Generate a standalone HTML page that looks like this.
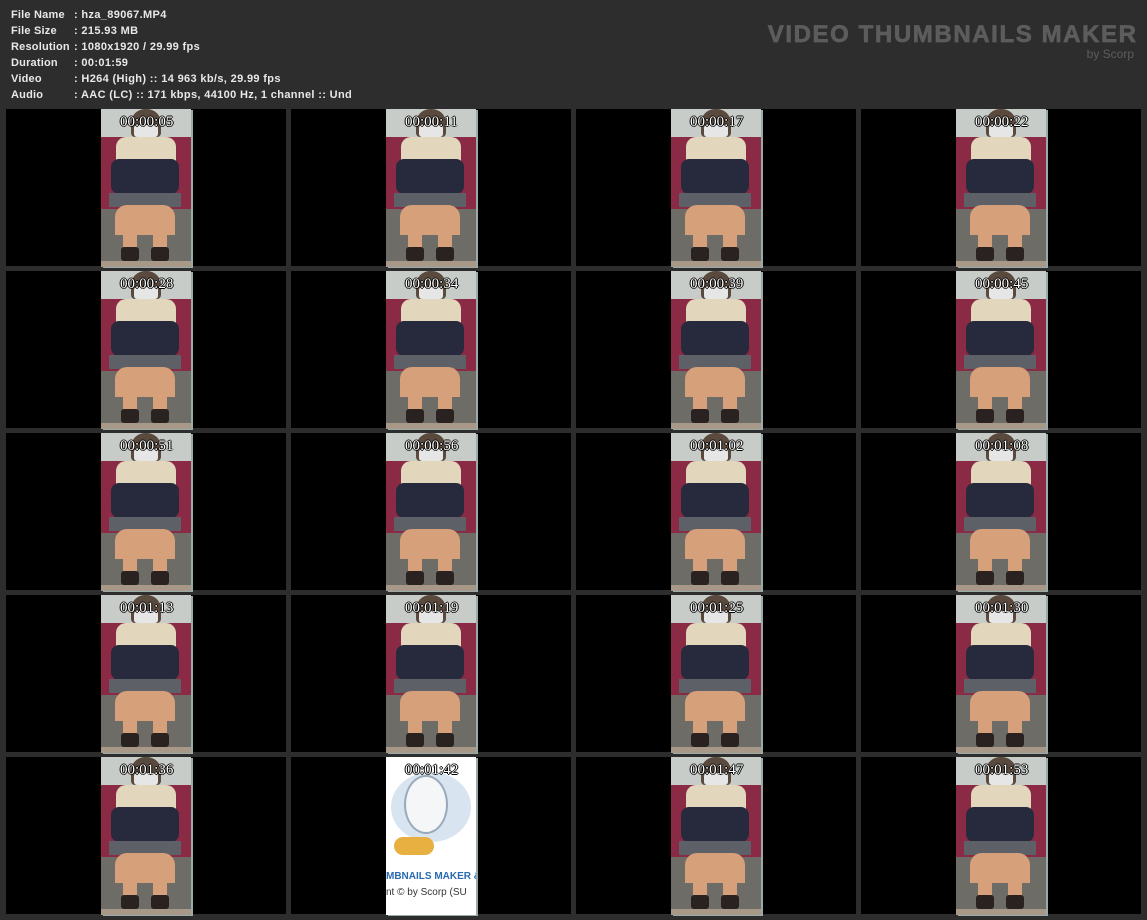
<!DOCTYPE html>
<html><head><meta charset="utf-8"><style>
body{margin:0;width:1147px;height:920px;background:#2d2d2d;position:relative;overflow:hidden;font-family:"Liberation Sans",sans-serif}
.info{position:absolute;left:11px;top:7px;color:#e8e8e8;font-weight:bold;font-size:11px;line-height:16px;font-family:"Liberation Sans",sans-serif;letter-spacing:0.35px}
.info div span{display:inline-block;width:63px;letter-spacing:0.2px}
.logo{position:absolute;right:11px;top:21px;text-align:right;color:#5c5c5c}
.logo b{font-family:"Liberation Sans",sans-serif;font-weight:bold;font-size:24px;letter-spacing:1.6px;margin-right:-1.6px;-webkit-text-stroke:0.7px #5c5c5c;display:block;line-height:28px}
.logo i{font-style:normal;font-size:12px;display:block;line-height:11px;margin-right:2px}
.cell{position:absolute;width:280px;height:157px;background:#000}
.th{position:absolute;left:95px;top:0;width:90px;height:158px;background:#c8ccc8;overflow:hidden;box-shadow:2px 1px 0 #9aa}
.th div{position:absolute}
.ts{position:absolute;left:19px;top:5px;color:#fff;font-family:"Liberation Serif",serif;font-size:15px;text-shadow:-1px 0 #000,1px 0 #000,0 -1px #000,0 1px #000}
</style></head><body>
<div class="info">
<div><span>File Name</span>: hza_89067.MP4</div>
<div><span>File Size</span>: 215.93 MB</div>
<div><span>Resolution</span>: 1080x1920 / 29.99 fps</div>
<div><span>Duration</span>: 00:01:59</div>
<div><span>Video</span>: H264 (High) :: 14 963 kb/s, 29.99 fps</div>
<div><span>Audio</span>: AAC (LC) :: 171 kbps, 44100 Hz, 1 channel :: Und</div>
</div>
<div class="logo"><b>VIDEO THUMBNAILS MAKER</b><i>by Scorp</i></div>
<div id="g"></div>
<script>
var ts=["00:00:05","00:00:11","00:00:17","00:00:22","00:00:28","00:00:34","00:00:39","00:00:45","00:00:51","00:00:56","00:01:02","00:01:08","00:01:13","00:01:19","00:01:25","00:01:30","00:01:36","00:01:42","00:01:47","00:01:53"];
var fig='<div style="left:0;top:28px;width:90px;height:80px;background:#8a2a45"></div>'+
'<div style="left:0;top:100px;width:90px;height:55px;background:#6e6c66"></div>'+
'<div style="left:30px;top:0;width:30px;height:28px;background:#5a4a3e;border-radius:14px 14px 4px 4px"></div>'+
'<div style="left:33px;top:16px;width:24px;height:12px;background:#e6e6e6;border-radius:3px"></div>'+
'<div style="left:15px;top:28px;width:60px;height:30px;background:#e2d7bd;border-radius:10px 10px 0 0"></div>'+
'<div style="left:10px;top:50px;width:68px;height:35px;background:#262a3c;border-radius:8px"></div>'+
'<div style="left:8px;top:84px;width:72px;height:14px;background:#5e6068"></div>'+
'<div style="left:14px;top:96px;width:60px;height:30px;background:#d6a07a;border-radius:12px 12px 0 0"></div>'+
'<div style="left:22px;top:120px;width:14px;height:22px;background:#d6a07a"></div>'+
'<div style="left:52px;top:120px;width:14px;height:22px;background:#d6a07a"></div>'+
'<div style="left:20px;top:138px;width:18px;height:14px;background:#2a2220;border-radius:3px"></div>'+
'<div style="left:50px;top:138px;width:18px;height:14px;background:#2a2220;border-radius:3px"></div>'+
'<div style="left:0;top:152px;width:90px;height:6px;background:#a89888"></div>';
var owl='<div style="left:0;top:0;width:90px;height:158px;background:#fff"></div>'+
'<div style="left:5px;top:15px;width:80px;height:70px;background:#d8e4f0;border-radius:50%"></div>'+
'<div style="left:20px;top:20px;width:40px;height:55px;background:#f4f6f8;border-radius:50%;box-shadow:0 0 0 2px #9ab"></div>'+
'<div style="left:8px;top:80px;width:40px;height:18px;background:#e8b040;border-radius:9px"></div>'+
'<div style="left:0;top:114px;width:90px;font:bold 10px sans-serif;color:#2a6ab0;white-space:nowrap">MBNAILS MAKER &amp;</div>'+
'<div style="left:0;top:130px;width:90px;font:10px sans-serif;color:#333;white-space:nowrap">nt © by Scorp (SU</div>';
var h='';
for(var i=0;i<20;i++){var c=i%4,r=Math.floor(i/4);
h+='<div class="cell" style="left:'+(6+c*285)+'px;top:'+(109+r*162)+'px"><div class="th">'+(i==17?owl:fig)+'<span class="ts">'+ts[i]+'</span></div></div>';}
document.getElementById('g').innerHTML=h;
</script>
</body></html>
